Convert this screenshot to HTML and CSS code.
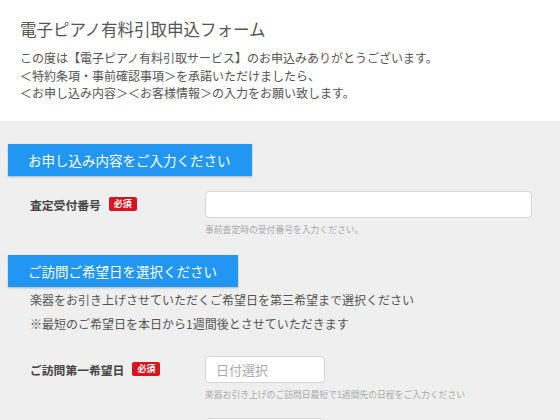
FILE: index.html
```html
<!DOCTYPE html>
<html lang="ja">
<head>
    <meta charset="UTF-8">
    <meta name="viewport" content="width=device-width, initial-scale=1.0">
    <title>電子ピアノ有料引取申込フォーム</title>
    <link rel="stylesheet" href="styles.css">
</head>
<body>
    <header class="intro">
        <h1 class="intro-title">電子ピアノ有料引取申込フォーム</h1>
        <p class="intro-text">
            この度は【電子ピアノ有料引取サービス】のお申込みありがとうございます。<br>
            ＜特約条項・事前確認事項＞を承諾いただけましたら、<br>
            ＜お申し込み内容＞＜お客様情報＞の入力をお願い致します。
        </p>
    </header>

    <main class="form-area">
        <section class="block">
            <h2 class="block-head">お申し込み内容をご入力ください</h2>
            <div class="row">
                <div class="row-label">査定受付番号<span class="badge">必須</span></div>
                <div class="row-field">
                    <input type="text" class="field wide">
                    <p class="hint">事前査定時の受付番号を入力ください。</p>
                </div>
            </div>
        </section>

        <section class="block">
            <h2 class="block-head">ご訪問ご希望日を選択ください</h2>
            <p class="block-text">
                楽器をお引き上げさせていただくご希望日を第三希望まで選択ください<br>
                ※最短のご希望日を本日から1週間後とさせていただきます
            </p>
            <div class="row">
                <div class="row-label">ご訪問第一希望日<span class="badge">必須</span></div>
                <div class="row-field">
                    <input type="text" class="field date" placeholder="日付選択">
                    <p class="hint">楽器お引き上げのご訪問日最短で1週間先の日程をご入力ください</p>
                </div>
            </div>
            <div class="row">
                <div class="row-label"></div>
                <div class="row-field">
                    <input type="text" class="field date" placeholder="日付選択">
                </div>
            </div>
        </section>
    </main>
</body>
</html>
```

FILE: styles.css
```css
body {
    margin: 0;
    background-color: #efefef;
    font-family: "Noto Sans CJK JP", "Noto Sans", sans-serif;
    color: #555;
}
.intro {
    background-color: #fff;
    padding: 17px 20px 19px;
}
.intro-title {
    margin: 0 0 8px;
    font-size: 16.5px;
    font-weight: normal;
    line-height: 24px;
    color: #555;
}
.intro-text {
    margin: 0;
    font-size: 12px;
    line-height: 17.5px;
}
.form-area {
    padding-top: 23px;
}
.block-head {
    display: inline-block;
    margin: 0 0 0 8px;
    padding: 0 21px 0 20px;
    height: 32px;
    line-height: 32px;
    background-color: #2196f3;
    color: #fff;
    font-size: 13.5px;
    font-weight: normal;
    box-shadow: 0 1px 2px rgba(0, 0, 0, 0.25);
}
.block {
    margin-bottom: 19px;
}
.block-text {
    margin: 1px 0 0 30px;
    font-size: 12px;
    line-height: 24px;
}
.row {
    display: flex;
    margin-top: 15px;
}
.block-text + .row {
    margin-top: 20px;
}
.row + .row {
    margin-top: 17px;
}
.row-label {
    width: 175px;
    height: 27px;
    padding-left: 30px;
    display: flex;
    align-items: center;
    font-size: 11.8px;
    font-weight: bold;
    color: #444;
}
.badge {
    display: inline-block;
    margin-left: 8px;
    width: 28px;
    height: 14px;
    line-height: 14px;
    text-align: center;
    border-radius: 2px;
    background-color: #d8141e;
    color: #fff;
    font-size: 9px;
}
.field {
    box-sizing: border-box;
    height: 27px;
    border: 1px solid #d6d6d6;
    border-radius: 4px;
    background-color: #fff;
    outline: none;
    padding: 0 10px;
    font-family: inherit;
    font-size: 13px;
    color: #555;
    display: block;
}
.field::placeholder {
    color: #aaa;
}
.wide {
    width: 327px;
}
.date {
    width: 120px;
}
.hint {
    margin: 5px 0 0;
    font-size: 8.8px;
    line-height: 13px;
    color: #aaa;
}
```
